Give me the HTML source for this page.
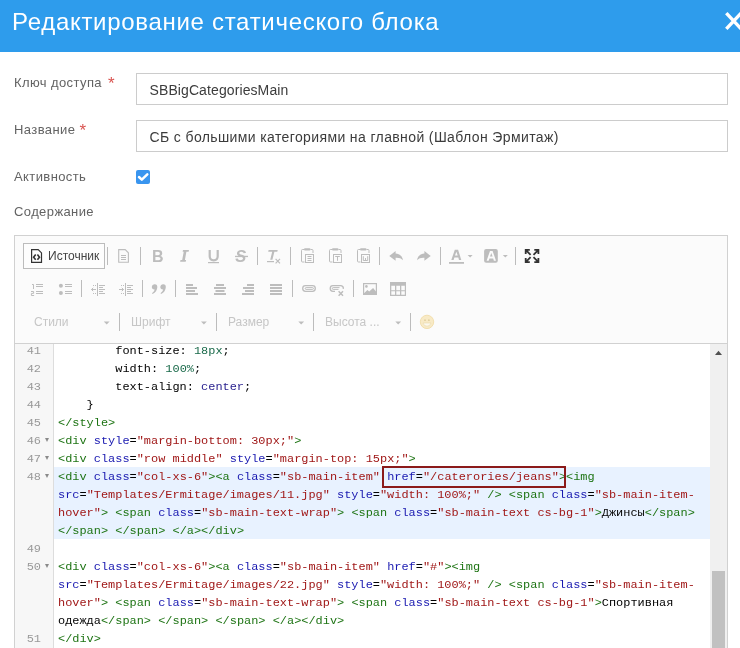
<!DOCTYPE html>
<html><head><meta charset="utf-8">
<style>
html,body{margin:0;padding:0;background:#fff;width:740px;height:648px;overflow:hidden;position:relative;font-family:"Liberation Sans",sans-serif;}
#hdr{position:absolute;left:0;top:0;width:740px;height:52px;background:#2e9cec;}
#title{position:absolute;left:12px;top:8px;font-size:24px;color:#fff;white-space:nowrap;line-height:28px;letter-spacing:0.7px;}
.lbl{position:absolute;left:14px;font-size:13px;color:#636363;white-space:nowrap;line-height:16px;letter-spacing:0.4px;}
.req{position:absolute;font-size:17px;line-height:16px;color:#d9534f;}
.inp{position:absolute;left:136px;width:590px;height:30px;border:1px solid #ccc;background:#fff;}
.inp span{position:absolute;left:12.5px;top:8px;font-size:14px;color:#3c3c3c;white-space:nowrap;line-height:17px;}
#chk{position:absolute;left:136px;top:170px;width:14px;height:14px;background:#3995ef;border-radius:2px;}
#edbox{position:absolute;left:14px;top:235px;width:712px;height:420px;border:1px solid #d1d1d1;background:#fff;}
#tbar{position:absolute;left:15px;top:236px;width:712px;height:107px;background:#fbfbfb;border-bottom:1px solid #d1d1d1;}
#srcbtn{position:absolute;left:23px;top:243px;width:80px;height:24px;border:1px solid #bcbcbc;background:#fdfdfd;}
#srctxt{position:absolute;left:48px;top:249px;font-size:12px;line-height:14px;color:#444;white-space:nowrap;}
.combo{position:absolute;top:315px;font-size:12px;line-height:14px;color:#c6c6c6;white-space:nowrap;}
#gutter{position:absolute;left:15px;top:344px;width:38px;height:304px;background:#f7f7f7;border-right:1px solid #ddd;}
#hl{position:absolute;left:54px;top:467px;width:656px;height:72px;background:#e8f2ff;}
.row{position:absolute;left:58px;height:18px;line-height:18px;font-family:"Liberation Mono",monospace;font-size:11.93px;color:#000;white-space:pre;transform:scaleY(0.9);transform-origin:0 12px;}
.ln{position:absolute;left:15px;width:26px;text-align:right;height:18px;line-height:18px;font-family:"Liberation Mono",monospace;font-size:11.93px;color:#999;transform:scaleY(0.9);transform-origin:0 12px;}
.fold{position:absolute;left:45px;width:0;height:0;border-left:2.5px solid transparent;border-right:2.5px solid transparent;border-top:4px solid #8a8a8a;margin-top:6px;}
.t{color:#1e7414;} .a{color:#1818b0;} .s{color:#a01818;} .n{color:#1a6a4a;} .k{color:#2a228f;}
#redbox{position:absolute;left:382px;top:466px;width:180px;height:18px;border:2px solid #8b1a1a;}
#sbtrack{position:absolute;left:710px;top:344px;width:17px;height:304px;background:#f0f0f0;}
#sbthumb{position:absolute;left:712px;top:571px;width:13px;height:80px;background:#c1c1c1;}
#svg{position:absolute;left:0;top:0;}
#wrap{position:absolute;left:0;top:0;width:740px;height:648px;will-change:transform;}
</style></head><body><div id="wrap">
<div id="hdr"><div id="title">Редактирование статического блока</div></div>
<div class="lbl" style="top:75px">Ключ доступа</div><div class="req" style="left:108px;top:76px">*</div>
<div class="inp" style="top:73px"><span style="letter-spacing:0.1px">SBBigCategoriesMain</span></div>
<div class="lbl" style="top:122px">Название</div><div class="req" style="left:79.5px;top:123px">*</div>
<div class="inp" style="top:120px"><span style="letter-spacing:0.38px">СБ с большими категориями на главной (Шаблон Эрмитаж)</span></div>
<div class="lbl" style="top:169px">Активность</div>
<div id="chk"></div>
<div class="lbl" style="top:204px">Содержание</div>
<div id="edbox"></div>
<div id="tbar"></div>
<div id="srcbtn"></div>
<div id="srctxt">Источник</div>
<div class="combo" style="left:34px">Стили</div>
<div class="combo" style="left:131px">Шрифт</div>
<div class="combo" style="left:228px">Размер</div>
<div class="combo" style="left:325px">Высота ...</div>
<div id="gutter"></div>
<div id="hl"></div>
<div id="sbtrack"></div>
<div id="sbthumb"></div>
<div class="row" style="top:342px">        font-size: <span class="n">18px</span>;</div>
<div class="ln" style="top:342px">41</div>
<div class="row" style="top:360px">        width: <span class="n">100%</span>;</div>
<div class="ln" style="top:360px">42</div>
<div class="row" style="top:378px">        text-align: <span class="k">center</span>;</div>
<div class="ln" style="top:378px">43</div>
<div class="row" style="top:396px">    }</div>
<div class="ln" style="top:396px">44</div>
<div class="row" style="top:414px"><span class="t">&lt;/style&gt;</span></div>
<div class="ln" style="top:414px">45</div>
<div class="row" style="top:432px"><span class="t">&lt;div</span> <span class="a">style</span>=<span class="s">&quot;margin-bottom: 30px;&quot;</span><span class="t">&gt;</span></div>
<div class="ln" style="top:432px">46</div>
<div class="fold" style="top:432px"></div>
<div class="row" style="top:450px"><span class="t">&lt;div</span> <span class="a">class</span>=<span class="s">&quot;row middle&quot;</span> <span class="a">style</span>=<span class="s">&quot;margin-top: 15px;&quot;</span><span class="t">&gt;</span></div>
<div class="ln" style="top:450px">47</div>
<div class="fold" style="top:450px"></div>
<div class="row" style="top:468px"><span class="t">&lt;div</span> <span class="a">class</span>=<span class="s">&quot;col-xs-6&quot;</span><span class="t">&gt;</span><span class="t">&lt;a</span> <span class="a">class</span>=<span class="s">&quot;sb-main-item&quot;</span> <span class="a">href</span>=<span class="s">&quot;/caterories/jeans&quot;</span><span class="t">&gt;</span><span class="t">&lt;img</span></div>
<div class="ln" style="top:468px">48</div>
<div class="fold" style="top:468px"></div>
<div class="row" style="top:486px"><span class="a">src</span>=<span class="s">&quot;Templates/Ermitage/images/11.jpg&quot;</span> <span class="a">style</span>=<span class="s">&quot;width: 100%;&quot;</span> <span class="t">/&gt;</span> <span class="t">&lt;span</span> <span class="a">class</span>=<span class="s">&quot;sb-main-item-</span></div>
<div class="row" style="top:504px"><span class="s">hover&quot;</span><span class="t">&gt;</span> <span class="t">&lt;span</span> <span class="a">class</span>=<span class="s">&quot;sb-main-text-wrap&quot;</span><span class="t">&gt;</span> <span class="t">&lt;span</span> <span class="a">class</span>=<span class="s">&quot;sb-main-text cs-bg-1&quot;</span><span class="t">&gt;</span>Джинсы<span class="t">&lt;/span&gt;</span></div>
<div class="row" style="top:522px"><span class="t">&lt;/span&gt;</span> <span class="t">&lt;/span&gt;</span> <span class="t">&lt;/a&gt;&lt;/div&gt;</span></div>
<div class="row" style="top:540px"></div>
<div class="ln" style="top:540px">49</div>
<div class="row" style="top:558px"><span class="t">&lt;div</span> <span class="a">class</span>=<span class="s">&quot;col-xs-6&quot;</span><span class="t">&gt;</span><span class="t">&lt;a</span> <span class="a">class</span>=<span class="s">&quot;sb-main-item&quot;</span> <span class="a">href</span>=<span class="s">&quot;#&quot;</span><span class="t">&gt;</span><span class="t">&lt;img</span></div>
<div class="ln" style="top:558px">50</div>
<div class="fold" style="top:558px"></div>
<div class="row" style="top:576px"><span class="a">src</span>=<span class="s">&quot;Templates/Ermitage/images/22.jpg&quot;</span> <span class="a">style</span>=<span class="s">&quot;width: 100%;&quot;</span> <span class="t">/&gt;</span> <span class="t">&lt;span</span> <span class="a">class</span>=<span class="s">&quot;sb-main-item-</span></div>
<div class="row" style="top:594px"><span class="s">hover&quot;</span><span class="t">&gt;</span> <span class="t">&lt;span</span> <span class="a">class</span>=<span class="s">&quot;sb-main-text-wrap&quot;</span><span class="t">&gt;</span> <span class="t">&lt;span</span> <span class="a">class</span>=<span class="s">&quot;sb-main-text cs-bg-1&quot;</span><span class="t">&gt;</span>Спортивная</div>
<div class="row" style="top:612px">одежда<span class="t">&lt;/span&gt;</span> <span class="t">&lt;/span&gt;</span> <span class="t">&lt;/span&gt;</span> <span class="t">&lt;/a&gt;&lt;/div&gt;</span></div>
<div class="row" style="top:630px"><span class="t">&lt;/div&gt;</span></div>
<div class="ln" style="top:630px">51</div>
<div id="redbox"></div>
<svg id="svg" width="740" height="648" viewBox="0 0 740 648">
<!-- header close X -->
<path d="M726.3 13.2L741.1 28.8M741.1 13.2L726.3 28.8" stroke="#fff" stroke-width="3.4"/>
<!-- checkbox check -->
<path d="M139 177L141.8 179.6L147.3 174.3" fill="none" stroke="#fff" stroke-width="2.5" stroke-linecap="round" stroke-linejoin="round"/>
<g fill="#bcbcbc">
<!-- separators row1 -->
<rect x="107" y="247" width="1" height="18"/><rect x="140" y="247" width="1" height="18"/>
<rect x="257" y="247" width="1" height="18"/><rect x="290" y="247" width="1" height="18"/>
<rect x="379" y="247" width="1" height="18"/><rect x="440" y="247" width="1" height="18"/>
<rect x="515" y="247" width="1" height="18"/>
<!-- separators row2 -->
<rect x="81" y="280" width="1" height="17"/><rect x="142" y="280" width="1" height="17"/>
<rect x="175" y="280" width="1" height="17"/><rect x="292" y="280" width="1" height="17"/>
<rect x="353" y="280" width="1" height="17"/>
<!-- separators row3 -->
<rect x="119" y="313" width="1" height="18"/><rect x="216" y="313" width="1" height="18"/>
<rect x="313" y="313" width="1" height="18"/><rect x="410" y="313" width="1" height="18"/>
</g>
<!-- source icon -->
<path d="M31.6 249.6H38.2L41.5 252.9V262.4H31.6Z" fill="none" stroke="#333" stroke-width="1.2"/>
<path d="M35.7 254.6L33.6 257.2L35.7 259.8M37.4 254.6L39.5 257.2L37.4 259.8" fill="none" stroke="#333" stroke-width="1.6"/>
<g fill="none" stroke="#bdbdbd" stroke-width="1.1">
<!-- new page -->
<path d="M118.7 249.6H125.2L128.4 252.8V262.3H118.7Z"/>
<path d="M121 255.5H126M121 257.5H126M121 259.5H126"/>
</g>
<g fill="#bdbdbd">
<text x="152" y="261.6" font-family="Liberation Sans" font-weight="bold" font-size="16">B</text>
<path d="M183 250H189L188.6 251.7H186.4L184.9 260H186.1L185.7 261.8H180.1L180.5 260H182.2L183.7 251.7H182.6Z"/>
<text x="235.2" y="261.7" font-family="Liberation Sans" font-weight="bold" font-style="italic" font-size="16.5">S</text>
<rect x="235" y="255.8" width="13" height="1.3"/>
<rect x="208" y="262" width="11" height="1.2"/>
<!-- Tx -->
<path d="M268.6 250H277.7L277.3 251.8H274.4L272.4 259.8H270.2L272.2 251.8H268.2Z"/>
<rect x="267" y="261" width="7" height="1.2"/>
</g>
<g fill="none" stroke="#bdbdbd">
<path d="M209.7 250V256.3Q209.7 260.3 213.7 260.3Q217.7 260.3 217.7 256.3V250" stroke-width="2.2"/>
<path d="M275.6 258.9L280 263.3M280 258.9L275.6 263.3" stroke-width="1.2"/>
</g>
<!-- paste icons -->
<g fill="none" stroke="#bdbdbd" stroke-width="1">
<path d="M304 249.5H302.5Q301.5 249.5 301.5 250.5V261Q301.5 262 302.5 262H304.5M310.5 249.5H312Q313 249.5 313 250.5V253"/>
<rect x="305.5" y="254.5" width="8" height="8"/>
<path d="M307.5 256.5H311.5M307.5 258.5H311.5M307.5 260.5H311.5"/>
<path d="M332 249.5H330.5Q329.5 249.5 329.5 250.5V261Q329.5 262 330.5 262H332.5M338.5 249.5H340Q341 249.5 341 250.5V253"/>
<rect x="333.5" y="254.5" width="8" height="8"/>
<path d="M335.2 256.5H339.8M337.5 256.5V260.8"/>
<path d="M360 249.5H358.5Q357.5 249.5 357.5 250.5V261Q357.5 262 358.5 262H360.5M366.5 249.5H368Q369 249.5 369 250.5V253"/>
<rect x="361.5" y="254.5" width="8" height="8"/>
<path d="M363.3 256.2V260.5H367.7V256.2M365.5 258V260.5"/>
</g>
<g fill="#bdbdbd">
<rect x="304" y="248.2" width="6.5" height="2.4" rx="1"/>
<rect x="332" y="248.2" width="6.5" height="2.4" rx="1"/>
<rect x="360" y="248.2" width="6.5" height="2.4" rx="1"/>
<!-- undo redo -->
<path d="M389.3 255.9L395.6 250.9V253.6C399.5 253.6 402.6 256.3 403 260.3C401.3 258.3 398.8 257.6 395.6 257.8V260.8Z"/>
<path d="M430.7 255.9L424.4 250.9V253.6C420.5 253.6 417.4 256.3 417 260.3C418.7 258.3 421.2 257.6 424.4 257.8V260.8Z"/>
<!-- text color -->
<path fill-rule="evenodd" d="M451.3 260L454.8 249.8H458.1L461.3 260H459L458.3 257.6H454.4L453.6 260ZM455 255.6H457.7L456.35 251.7Z"/>
<rect x="449" y="262" width="15" height="1.8"/>
<path d="M467.6 255.1H472.6L470.1 257.6Z"/>
<rect x="484.1" y="249" width="13.7" height="13.8" rx="2"/>
<path d="M502.8 255.1H507.8L505.3 257.6Z"/>
</g>
<path fill="#fbfbfb" fill-rule="evenodd" d="M486.6 260.8L490 250.9H492.6L496 260.8H493.9L493.2 258.5H489.4L488.7 260.8ZM490 256.6H492.6L491.3 252.9Z"/>
<!-- maximize -->
<g fill="none" stroke="#333" stroke-width="1.8">
<path d="M525.7 254V249.9H529.8M526.2 250.4L530.6 254.8"/>
<path d="M534.3 249.9H538.4V254M537.9 250.4L533.5 254.8"/>
<path d="M525.7 258V262.1H529.8M526.2 261.6L530.6 257.2"/>
<path d="M534.3 262.1H538.4V258M537.9 261.6L533.5 257.2"/>
</g>
<!-- row 2 -->
<g fill="#bdbdbd">
<rect x="36" y="284" width="7" height="1"/><rect x="36" y="286" width="7" height="1"/>
<rect x="36" y="291" width="7" height="1"/><rect x="36" y="293" width="7" height="1"/>
<rect x="65" y="284" width="7" height="1"/><rect x="65" y="286" width="7" height="1"/>
<rect x="65" y="291" width="7" height="1"/><rect x="65" y="293" width="7" height="1"/>
<circle cx="60.9" cy="285.7" r="2"/><circle cx="60.9" cy="293" r="2"/>
<!-- outdent -->
<rect x="97" y="283" width="1" height="13"/>
<rect x="99" y="285" width="6" height="1"/><rect x="99" y="287" width="4" height="1"/><rect x="99" y="289" width="6" height="1"/><rect x="99" y="291" width="4" height="1"/><rect x="99" y="293" width="6" height="1"/>
<rect x="93" y="285" width="1" height="1"/><rect x="95" y="285" width="1" height="1"/><rect x="93" y="293" width="1" height="1"/><rect x="95" y="293" width="1" height="1"/>
<!-- indent -->
<rect x="125" y="283" width="1" height="13"/>
<rect x="127" y="285" width="6" height="1"/><rect x="127" y="287" width="4" height="1"/><rect x="127" y="289" width="6" height="1"/><rect x="127" y="291" width="4" height="1"/><rect x="127" y="293" width="6" height="1"/>
<rect x="121" y="285" width="1" height="1"/><rect x="123" y="285" width="1" height="1"/><rect x="121" y="293" width="1" height="1"/><rect x="123" y="293" width="1" height="1"/>
<!-- align -->
<rect x="186" y="284" width="7" height="2"/><rect x="186" y="287" width="11" height="2"/><rect x="186" y="290" width="9" height="2"/><rect x="186" y="293" width="12" height="2"/>
<rect x="216" y="284" width="8" height="2"/><rect x="214" y="287" width="12" height="2"/><rect x="215.5" y="290" width="9" height="2"/><rect x="214" y="293" width="12" height="2"/>
<rect x="247" y="284" width="7" height="2"/><rect x="243" y="287" width="11" height="2"/><rect x="245" y="290" width="9" height="2"/><rect x="242" y="293" width="12" height="2"/>
<rect x="270" y="284" width="12" height="2"/><rect x="270" y="287" width="12" height="2"/><rect x="270" y="290" width="12" height="2"/><rect x="270" y="293" width="12" height="2"/>
<!-- blockquote -->
<path d="M151.8 286.8A2.75 2.75 0 1 1 157.3 287.2Q157.1 291.6 152.6 294L152 293.2Q154.6 291.4 154.7 289.5A2.75 2.75 0 0 1 151.8 286.8Z"/>
<path d="M160.3 286.8A2.75 2.75 0 1 1 165.8 287.2Q165.6 291.6 161.1 294L160.5 293.2Q163.1 291.4 163.2 289.5A2.75 2.75 0 0 1 160.3 286.8Z"/>
<!-- image frame -->
<path d="M364 294V293.2L367.4 290L369.2 291.6L373.1 288L376 291.6V294Z"/>
<circle cx="366.4" cy="286.4" r="1.3"/>
<!-- table header -->
<path fill-rule="evenodd" d="M390 282H406V296H390ZM391.3 285.7H395V290.2H391.3ZM396.3 285.7H400V290.2H396.3ZM401.3 285.7H404.8V290.2H401.3ZM391.3 291.3H395V294.8H391.3ZM396.3 291.3H400V294.8H396.3ZM401.3 291.3H404.8V294.8H401.3Z"/>
<!-- combo arrows -->
<path d="M103.8 321.6H109.6L106.7 324.5Z"/>
<path d="M201 321.6H206.8L203.9 324.5Z"/>
<path d="M298.3 321.6H304.1L301.2 324.5Z"/>
<path d="M395.3 321.6H401.1L398.2 324.5Z"/>
</g>
<g fill="none" stroke="#bdbdbd" stroke-width="1">
<path d="M32 284.5H33.5V289"/>
<path d="M31 291.5H33.6V293.4H31.4V295.5H34.1"/>
<path d="M96 289.5H91.5M93.2 287.8L91.5 289.5L93.2 291.2"/>
<path d="M119 289.5H123.5M121.8 287.8L123.5 289.5L121.8 291.2"/>
<rect x="363.6" y="283.6" width="12.8" height="10.8" stroke-width="1.2"/>

</g>
<g fill="none" stroke="#bdbdbd" stroke-width="1.3">
<rect x="302.7" y="285.7" width="12.6" height="5.6" rx="2.8"/>
<rect x="305.2" y="287.6" width="8.2" height="1.8" rx="0.9" stroke-width="1"/>
<path d="M335 291.3H333A2.8 2.8 0 0 1 333 285.7H341A2.8 2.8 0 0 1 343.3 288.8"/>
<path d="M338.5 289.4H333.2A0.9 0.9 0 0 1 333.2 287.6H339.5" stroke-width="1"/>
<path d="M338.6 291.3L343 295.7M343 291.3L338.6 295.7" stroke-width="1.5"/>
</g>
<!-- smiley -->
<circle cx="427" cy="321.9" r="6.7" fill="#f8eac6" stroke="#f0dda9" stroke-width="0.9"/>
<circle cx="425" cy="320.2" r="0.9" fill="#e0cf9e"/><circle cx="428.9" cy="320.2" r="0.9" fill="#e0cf9e"/>
<path d="M423 323H431Q430.2 326.2 427 326.2Q423.8 326.2 423 323Z" fill="#fcf8ee" stroke="#e8d8aa" stroke-width="0.6"/>
<!-- scroll arrow -->
<path d="M715 355H722L718.5 350.8Z" fill="#505050"/>
</svg>
</div></body></html>
